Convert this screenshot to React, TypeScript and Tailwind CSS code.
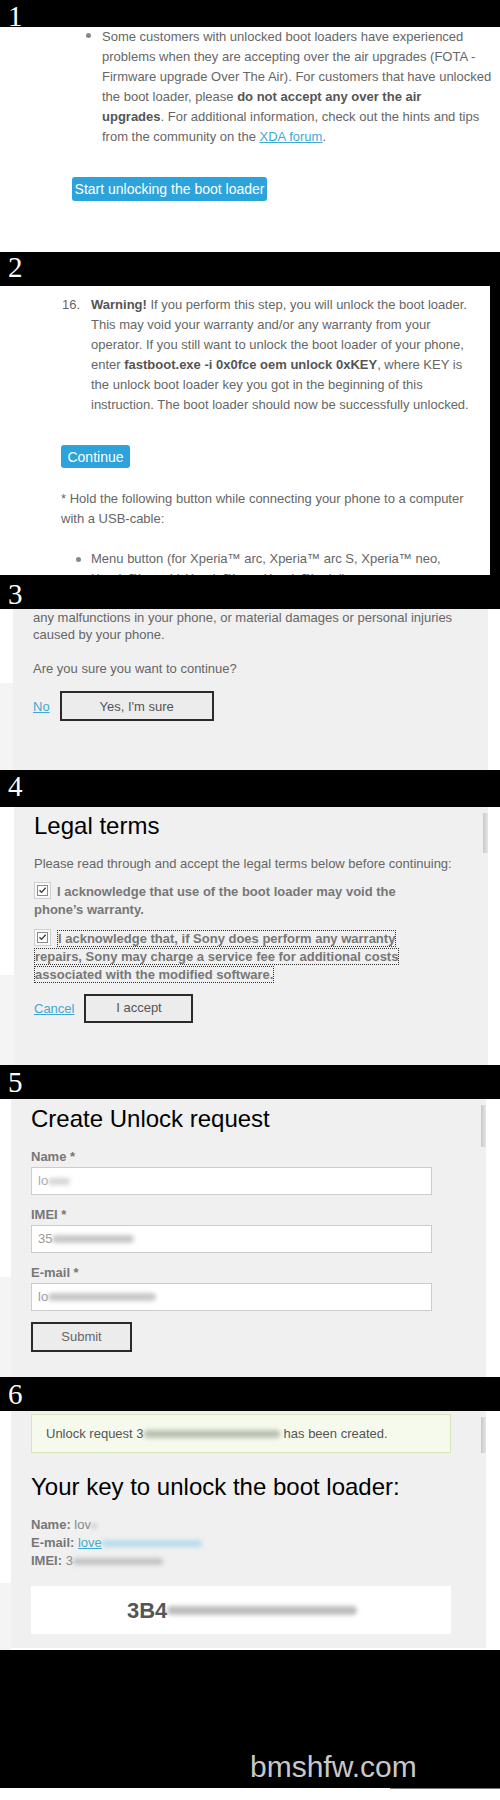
import React from "react";

// Black header strip with a serif step number
function Band({ n, cls }: { n: string; cls: string }) {
  return (
    <div className={`bg-black text-white font-['Liberation_Serif',serif] text-[29px] leading-none pl-[8px] ${cls}`}>
      {n}
    </div>
  );
}

// Redacted value smudge
function Smudge({ cls }: { cls: string }) {
  return <span className={`inline-block align-middle rounded-full blur-[2px] ${cls}`} />;
}

function CheckBox() {
  return (
    <svg width="17" height="17" viewBox="0 0 17 17" className="inline-block align-[-3px] mr-[6px]">
      <rect x="0.5" y="0.5" width="16" height="16" fill="#fafafa" stroke="#cfcfcf" />
      <rect x="3.5" y="3.5" width="10" height="10" fill="#fff" stroke="#8a8a8a" />
      <path d="M5.5 8.2 L7.6 10.4 L11.6 5.8" fill="none" stroke="#333" strokeWidth="1.3" />
    </svg>
  );
}

function Thumb({ cls }: { cls: string }) {
  return (
    <div className="w-[5px] shrink-0">
      <div className={`w-[5px] bg-gradient-to-r from-[#c9c9c9] to-[#e6e6e6] ${cls}`} />
    </div>
  );
}

const GrayButton = ({ label, cls }: { label: string; cls: string }) => (
  <button className={`border-2 border-[#2a2a2a] bg-[#ececec] text-[#555] text-[13px] ${cls}`}>{label}</button>
);

export default function App() {
  return (
    <div className="w-[500px] h-[1800px] overflow-hidden bg-white font-['Liberation_Sans',Arial,sans-serif] text-[13px] text-[#666]">
      <Band n="1" cls="h-[27px] pt-[2px]" />

      {/* step 1: note about FOTA */}
      <section className="h-[225px] bg-white">
        <div className="flex pl-[86px] leading-[20px] whitespace-nowrap">
          <span className="w-[5px] h-[5px] rounded-full bg-[#888] mt-[6px] mr-[11px] shrink-0" />
          <p>
            Some customers with unlocked boot loaders have experienced<br />
            problems when they are accepting over the air upgrades (FOTA -<br />
            Firmware upgrade Over The Air). For customers that have unlocked<br />
            the boot loader, please <b className="text-[#555]">do not accept any over the air</b><br />
            <b className="text-[#555]">upgrades</b>. For additional information, check out the hints and tips<br />
            from the community on the <a className="text-[#3fa9d3] underline">XDA forum</a>.
          </p>
        </div>
        <div className="pl-[72px] mt-[30px]">
          <button className="w-[195px] h-[24px] rounded-[3px] bg-[#2da3db] text-white text-[14px] leading-none">
            Start unlocking the boot loader
          </button>
        </div>
      </section>

      <Band n="2" cls="h-[34px] pt-[1px]" />

      {/* step 2: fastboot command */}
      <section className="h-[289px] flex bg-black">
        <div className="flex-1 bg-white overflow-hidden pt-[9px] leading-[20px] whitespace-nowrap">
          <div className="flex pl-[62px]">
            <span className="w-[29px] shrink-0">16.</span>
            <p>
              <b className="text-[#555]">Warning!</b> If you perform this step, you will unlock the boot loader.<br />
              This may void your warranty and/or any warranty from your<br />
              operator. If you still want to unlock the boot loader of your phone,<br />
              enter <b className="text-[#555]">fastboot.exe -i 0x0fce oem unlock 0xKEY</b>, where KEY is<br />
              the unlock boot loader key you got in the beginning of this<br />
              instruction. The boot loader should now be successfully unlocked.
            </p>
          </div>
          <div className="pl-[61px] mt-[30px]">
            <button className="w-[69px] h-[23px] rounded-[3px] bg-[#2da3db] text-white text-[14px] leading-none">Continue</button>
          </div>
          <p className="pl-[61px] mt-[21px]">
            * Hold the following button while connecting your phone to a computer<br />
            with a USB-cable:
          </p>
          <div className="flex pl-[76px] mt-[20px]">
            <span className="w-[5px] h-[5px] rounded-full bg-[#888] mt-[8px] mr-[10px] shrink-0" />
            <p>
              Menu button (for Xperia™ arc, Xperia™ arc S, Xperia™ neo,<br />
              Xperia™ neo V, Xperia™ ray, Xperia™ mini)
            </p>
          </div>
        </div>
        <div className="w-[10px] shrink-0" />
      </section>

      <Band n="3" cls="h-[34px] pt-[5px]" />

      {/* step 3: confirmation */}
      <section className="h-[161px] flex">
        <div className="w-[13px] flex flex-col shrink-0">
          <div className="h-[74px] bg-white" />
          <div className="flex-1 bg-[#f4f4f4]" />
        </div>
        <div className="flex-1 bg-[#f0f0f0] pl-[20px] leading-[17px] whitespace-nowrap">
          <p>
            any malfunctions in your phone, or material damages or personal injuries<br />
            caused by your phone.
          </p>
          <p className="mt-[17px]">Are you sure you want to continue?</p>
          <div className="flex items-center mt-[14px]">
            <a className="text-[#3fa9d3] underline mr-[10px]">No</a>
            <GrayButton label="Yes, I'm sure" cls="w-[154px] h-[30px]" />
          </div>
        </div>
        <div className="w-[12px] bg-white shrink-0" />
      </section>

      <Band n="4" cls="h-[37px] pt-[2px]" />

      {/* step 4: legal terms */}
      <section className="h-[258px] flex">
        <div className="w-[14px] flex flex-col shrink-0">
          <div className="h-[168px] bg-white" />
          <div className="flex-1 bg-[#f4f4f4]" />
        </div>
        <div className="flex-1 flex bg-[#f0f0f0]">
          <div className="flex-1 pl-[20px] pt-[5px] whitespace-nowrap">
            <h2 className="text-[24px] leading-[28px] text-black">Legal terms</h2>
            <p className="mt-[15px] leading-[17px]">Please read through and accept the legal terms below before continuing:</p>
            <p className="mt-[10px] leading-[18px] font-bold text-[#777]">
              <CheckBox />I acknowledge that use of the boot loader may void the<br />
              phone’s warranty.
            </p>
            <p className="mt-[10px] leading-[18px] font-bold text-[#777]">
              <CheckBox />
              {/* focused label: dotted box drawn around each line */}
              <span className="border border-dotted border-[#333] box-decoration-clone">
                I acknowledge that, if Sony does perform any warranty<br />
                repairs, Sony may charge a service fee for additional costs<br />
                associated with the modified software.
              </span>
            </p>
            <div className="flex items-center mt-[10px]">
              <a className="text-[#3fa9d3] underline mr-[10px]">Cancel</a>
              <GrayButton label="I accept" cls="w-[109px] h-[29px] pb-[2px]" />
            </div>
          </div>
          <Thumb cls="mt-[6px] h-[40px]" />
        </div>
        <div className="w-[12px] bg-white shrink-0" />
      </section>

      <Band n="5" cls="h-[34px] pt-[3px]" />

      {/* step 5: unlock request form */}
      <section className="h-[278px] flex">
        <div className="w-[11px] flex flex-col shrink-0">
          <div className="h-[178px] bg-white" />
          <div className="flex-1 bg-[#f4f4f4]" />
        </div>
        <div className="flex-1 flex bg-[#f0f0f0]">
          <div className="flex-1 pl-[20px] pt-[6px]">
            <h2 className="text-[24px] leading-[28px] text-black">Create Unlock request</h2>
            <label className="block mt-[15px] mb-[2px] leading-[17px] font-bold text-[#777]">Name *</label>
            <div className="w-[401px] h-[28px] bg-white border border-[#cccccc] flex items-center pl-[6px] text-[#aaa]">
              lo<Smudge cls="w-[22px] h-[7px] bg-[#d6d6d6]" />
            </div>
            <label className="block mt-[11px] mb-[2px] leading-[17px] font-bold text-[#777]">IMEI *</label>
            <div className="w-[401px] h-[28px] bg-white border border-[#cccccc] flex items-center pl-[6px] text-[#999]">
              35<Smudge cls="w-[82px] h-[8px] bg-[#c8c8c8]" />
            </div>
            <label className="block mt-[11px] mb-[2px] leading-[17px] font-bold text-[#777]">E-mail *</label>
            <div className="w-[401px] h-[28px] bg-white border border-[#cccccc] flex items-center pl-[6px] text-[#999]">
              lo<Smudge cls="w-[108px] h-[8px] bg-[#c8c8c8]" />
            </div>
            <GrayButton label="Submit" cls="mt-[11px] w-[101px] h-[30px] text-[#666]" />
          </div>
          <Thumb cls="mt-[6px] h-[42px]" />
        </div>
        <div className="w-[14px] bg-white shrink-0" />
      </section>

      <Band n="6" cls="h-[34px] pt-[3px]" />

      {/* step 6: generated key */}
      <section className="h-[239px] flex">
        <div className="w-[11px] flex flex-col shrink-0">
          <div className="h-[172px] bg-white" />
          <div className="flex-1 bg-[#f4f4f4]" />
        </div>
        <div className="flex-1 flex bg-[#f0f0f0] mb-[2px]">
          <div className="flex-1 pl-[20px] pt-[3px]">
            <div className="w-[420px] h-[39px] bg-[#f6faec] border border-[#d6e6b9] flex items-center pl-[14px] text-[#555] whitespace-nowrap">
              Unlock request 3<Smudge cls="w-[136px] h-[8px] bg-[#b9c0b4] mr-[4px]" /> has been created.
            </div>
            <h2 className="mt-[20px] text-[24px] leading-[28px] text-black whitespace-nowrap">Your key to unlock the boot loader:</h2>
            <div className="mt-[15px] leading-[18px] text-[#888]">
              <p><b className="text-[#777]">Name:</b> lov<Smudge cls="w-[6px] h-[6px] bg-[#ccc]" /></p>
              <p>
                <b className="text-[#777]">E-mail:</b>{" "}
                <a className="text-[#3fa9d3] underline">love</a>
                <Smudge cls="w-[100px] h-[7px] bg-[#b8dcea]" />
              </p>
              <p><b className="text-[#777]">IMEI:</b> 3<Smudge cls="w-[90px] h-[7px] bg-[#c4c4c4]" /></p>
            </div>
            <div className="mt-[16px] w-[420px] h-[48px] bg-white flex items-center pl-[96px] whitespace-nowrap">
              <span className="text-[22px] font-bold text-[#555]">3B4</span>
              <Smudge cls="w-[190px] h-[9px] bg-[#bdbdbd]" />
            </div>
          </div>
          <Thumb cls="mt-[6px] h-[36px]" />
        </div>
        <div className="w-[14px] bg-white shrink-0" />
      </section>

      <footer className="h-[138px] bg-black pt-[100px] pl-[250px]">
        <span className="text-[30px] leading-[34px] text-[#c8c8c8]">bmshfw.com</span>
      </footer>
      <div className="h-[12px] bg-white flex justify-end">
        <div className="w-[110px] h-[1px] bg-[#777]" />
      </div>
    </div>
  );
}
